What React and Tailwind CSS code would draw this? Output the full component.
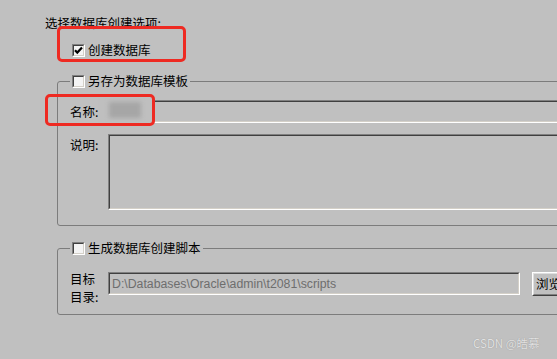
import React from 'react';

const cjk = { fontFamily: '"Noto Sans CJK SC", "Liberation Sans", sans-serif' };

function CheckBox({ checked }) {
  return (
    <span className="inline-flex h-[13px] w-[13px] shrink-0 border border-t-[#808080] border-l-[#808080] border-b-white border-r-white">
      <span className="flex h-full w-full items-center justify-center border border-t-[#404040] border-l-[#404040] border-b-[#d4d0c8] border-r-[#d4d0c8] bg-[#f4f4f4]">
        {checked && (
          <svg width="9" height="9" viewBox="0 0 9 9">
            <path d="M1 4.2 L3.3 6.6 L8 1.6" stroke="#000" strokeWidth="2.2" fill="none" />
          </svg>
        )}
      </span>
    </span>
  );
}

function Sunken({ className, children }) {
  return (
    <div className={`border border-t-[#808080] border-l-[#808080] border-b-white border-r-white ${className}`}>
      <div className="h-full w-full border border-t-[#404040] border-l-[#404040] border-b-[#d4d0c8] border-r-[#d4d0c8]">
        {children}
      </div>
    </div>
  );
}

function Group({ label, className, children }) {
  return (
    <fieldset className={`w-[540px] rounded-[3px] border border-[#7c7c7c] ${className}`}>
      <legend className="flex items-center gap-[3px] px-[2px] text-[12.5px] leading-[14px]">
        <CheckBox />
        <span>{label}</span>
      </legend>
      {children}
    </fieldset>
  );
}

export default function App() {
  return (
    <div
      className="relative h-[359px] w-[557px] overflow-hidden bg-[#c0c0c0] pl-[45px] pt-[15px] text-black"
      style={cjk}
    >
      <div className="text-[12.5px] leading-[15px]">选择数据库创建选项:</div>

      <div className="ml-[27px] mt-[13px] flex items-center gap-[3px] text-[12.5px] leading-[14px]">
        <CheckBox checked />
        <span>创建数据库</span>
      </div>

      <Group label="另存为数据库模板" className="ml-[12px] mt-[17px] h-[152px] pl-[12px] pt-[12px]">
        <div className="flex items-center">
          <span className="w-[38px] text-[12.5px] leading-[14px]">名称:</span>
          <Sunken className="h-[23px] flex-1" />
        </div>
        <div className="mt-[11px] flex items-start">
          <span className="mt-[4px] w-[38px] text-[12.5px] leading-[14px]">说明:</span>
          <Sunken className="h-[76px] flex-1" />
        </div>
      </Group>

      <Group label="生成数据库创建脚本" className="ml-[12px] mt-[15px] h-[74px] pl-[12px] pt-[17px]">
        <div className="flex items-start">
          <div className="-mt-[2px] w-[38px] text-[12.5px] leading-[18px]">
            <div>目标</div>
            <div>目录:</div>
          </div>
          <Sunken className="h-[23px] w-[412px]">
            <div
              className="px-[2px] text-[12.3px] leading-[20px] text-[#6e6e6e]"
              style={{ fontFamily: '"Liberation Sans", Arial, sans-serif' }}
            >
              D:\Databases\Oracle\admin\t2081\scripts
            </div>
          </Sunken>
          <div className="ml-[12px] h-[24px] w-[70px] border border-t-white border-l-white border-b-[#404040] border-r-[#404040]">
            <div className="h-full w-full whitespace-nowrap border border-t-[#dfdfdf] border-l-[#dfdfdf] border-b-[#808080] border-r-[#808080] pl-[2px] text-[12.5px] leading-[20px]">
              浏览
            </div>
          </div>
        </div>
      </Group>

      <div className="absolute left-[98px] top-[98px] h-[26px] w-[55px] bg-[#bfbfbf]">
        <div className="ml-[11px] mt-[4px] h-[16px] w-[32px] bg-[#a6a6a6] blur-[2px]" />
      </div>

      <div className="absolute left-[57px] top-[26px] h-[36px] w-[129px] rounded-[5px] border-[3px] border-[#ee2a22]" />
      <div className="absolute left-[45px] top-[94px] h-[32px] w-[110px] rounded-[5px] border-[3px] border-[#ee2a22]" />

      <div
        className="absolute left-[473px] top-[336px] whitespace-nowrap text-[11.5px] leading-[15px] text-[#e2e2e2]"
        style={{ textShadow: '0 0 1px #8a8a8a' }}
      >
        CSDN @皓慕
      </div>
    </div>
  );
}
